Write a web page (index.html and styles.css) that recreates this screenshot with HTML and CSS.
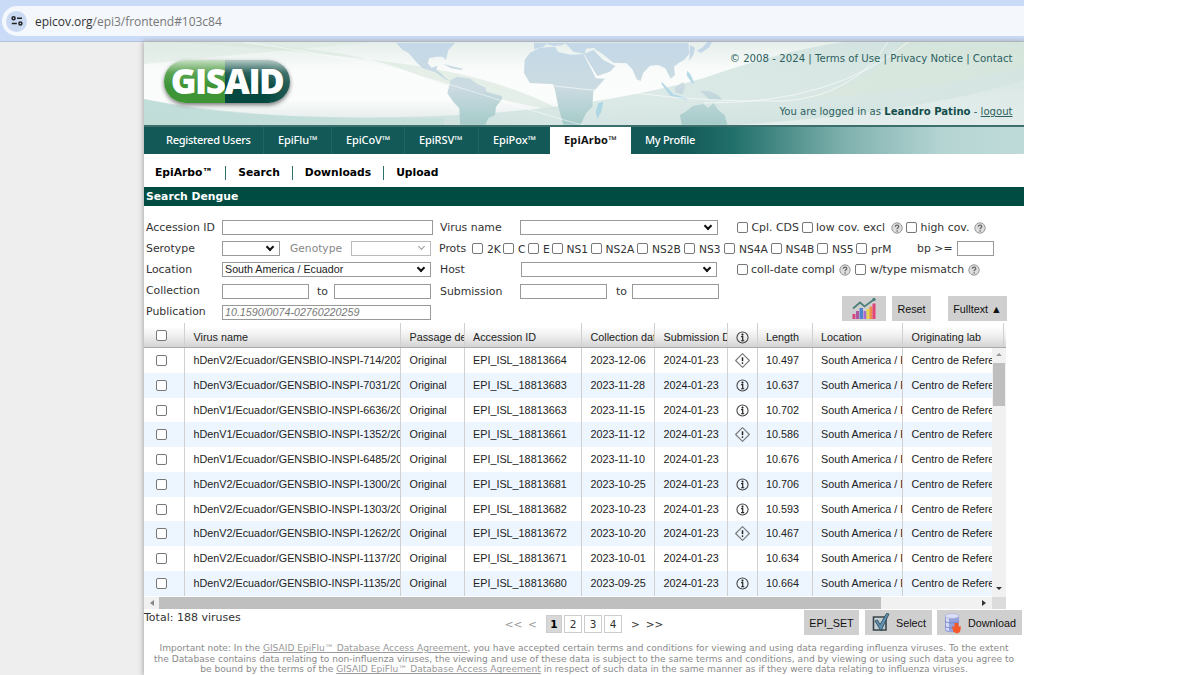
FILE: index.html
```html
<!DOCTYPE html>
<html lang="en">
<head>
  <meta charset="UTF-8">
  <meta name="viewport" content="width=device-width, initial-scale=1.0">
  <title>GISAID</title>
  <link rel="stylesheet" href="styles.css">
</head>
<body>
  <svg class="defs" width="0" height="0">
    <symbol id="info" viewBox="0 0 14 14">
      <circle cx="7" cy="7" r="5.2" fill="none" stroke="#444" stroke-width="1"/>
      <circle cx="7" cy="4.3" r="1" fill="#222"/>
      <path d="M5.700 6.200h1.500v3.600M5.700 10h2.900" fill="none" stroke="#222" stroke-width="1.1"/>
    </symbol>
    <symbol id="warn" viewBox="0 0 14 14">
      <path d="M7 .6L13.400 7 7 13.400 .6 7z" fill="none" stroke="#777" stroke-width="1" stroke-linejoin="round"/>
      <path d="M7 4v3.600" stroke="#222" stroke-width="1.4"/>
      <circle cx="7" cy="9.400" r=".8" fill="#222"/>
    </symbol>
    <symbol id="help" viewBox="0 0 12 12">
      <circle cx="6" cy="6" r="5.2" fill="#ddd" stroke="#999" stroke-width="1"/>
      <path d="M4.300 4.700c0-2.200 3.500-2.100 3.500-.1 0 1.300-1.700 1.200-1.700 2.600" fill="none" stroke="#666" stroke-width="1.200"/>
      <circle cx="6.100" cy="9" r=".8" fill="#666"/>
    </symbol>
  </svg>

  <div class="screen">
    <div class="browser">
      <div class="address">
        <span class="site-icon">
          <svg width="12" height="10" viewBox="0 0 12 10" fill="none" stroke="#222" stroke-width="1.5">
            <circle cx="2.6" cy="2.3" r="1.5"/><path d="M6 2.3h5M.8 7.6h5"/><circle cx="9.4" cy="7.6" r="1.5"/>
          </svg>
        </span>
        <span class="url">epicov.org<i>/epi3/frontend#103c84</i></span>
      </div>
    </div>

    <div class="page">
      <div class="header">
        <svg class="header-bg" width="880" height="83" viewBox="0 0 880 83">
          <defs>
            <linearGradient id="sky" x1="0" y1="0" x2="0" y2="1">
              <stop offset="0" stop-color="#e6efeb"/><stop offset=".35" stop-color="#fafcfb"/>
              <stop offset=".7" stop-color="#fbfcfc"/><stop offset="1" stop-color="#dfe9e7"/>
            </linearGradient>
            <linearGradient id="hill" x1="0" y1="0" x2="1" y2="0">
              <stop offset="0" stop-color="#b5d6d1"/><stop offset=".5" stop-color="#d2e4e1"/><stop offset="1" stop-color="#c8ddd9"/>
            </linearGradient>
            <linearGradient id="land" gradientUnits="userSpaceOnUse" x1="0" y1="128" x2="0" y2="374">
              <stop offset="0" stop-color="#c4d8e8"/><stop offset=".55" stop-color="#cbdbe1"/><stop offset="1" stop-color="#a5cbc9"/>
            </linearGradient>
            <linearGradient id="shine" x1="0" y1="0" x2="0" y2="1">
              <stop offset="0" stop-color="#fff" stop-opacity=".1"/><stop offset="1" stop-color="#fff" stop-opacity=".4"/>
            </linearGradient>
          </defs>
          <rect width="880" height="83" fill="url(#sky)"/>
          <path d="M0 0h230L80 14 0 22z" fill="#d9e8e0" opacity=".5"/>
          <path d="M30 0Q160 8 260 22T420 70Q330 55 260 28T30 0z" fill="#d7e6dc" opacity=".6"/>
          <path d="M0 57Q90 78 256 75Q430 72 560 36Q640 8 700 0H880V83H0z" fill="url(#hill)" opacity=".75"/>
          <path d="M0 57Q120 80 300 76V83H0z" fill="#c0ddd8" opacity=".6"/>
          <path d="M590 83Q780 70 880 38V83z" fill="url(#shine)"/>
          <path d="M700 0H880V24Q790 50 640 58Q720 50 760 0z" fill="#d9e7d9" opacity=".5"/>
          <g transform="translate(236 -42) scale(.33333)" fill="url(#land)">
            <path d="M48 128H226L205 150 198 180 188 170 170 170 148 174 143 190 155 203 173 197 168 210 182 218 197 235 208 240 212 243 195 238 165 216 128 205 112 190 85 158 68 150z"/>
            <path d="M190 192l26 7 34 7-8 4-30-6z"/>
            <path d="M212 240L232 230 270 236 292 252 315 262 320 275 366 288 365 300 348 320 345 345 325 355 316 374H240L238 325 222 308 202 280z"/>
            <path d="M462 128H560L545 136 520 138 500 132 490 140 462 148z"/>
            <path d="M450 158L480 143 525 140 535 156 572 164 610 162 648 235 675 236 640 275 637 320 618 340 602 374H550L535 320 525 270 518 252 450 250 432 220 434 180z"/>
            <path d="M555 128H640L645 143 618 146 615 162 580 155z"/>
            <path d="M612 162L640 150 670 180 706 198 690 215 652 228z"/>
            <path d="M640 128H925L928 160 915 178 895 190 882 200 885 225 872 236 856 205 835 195 810 197 790 218 782 243 770 238 757 208 740 190 700 188 668 162 645 148z"/>
            <path d="M930 135l15 8-5 22-12 18zM950 152l18-10 14-16h14l-8 16-25 17z"/>
            <path d="M884 262l25-15 8 14-10 22-20-5zM960 272l30 2 25 12 12 14-40-3z"/>
            <path d="M900 345L920 333 938 318 970 312 985 324 1000 308 1015 330 1034 345 1042 374H905z"/>
            <path d="M845 245l35 38 42 12-3 4-48-12-26-34zM922 212l10 12 12 28-8-3-16-23z" fill="#b4d8e5"/>
            <path d="M655 310l15-4-6 30-12 20-5-20z" fill="#aed6e3"/>
          </g>
          <path d="M383 41Q440 48 500 52Q560 60 640 59Q710 54 744 0M560 61Q690 62 764 0" fill="none" stroke="#fff" stroke-width="1" opacity=".6"/>
          <path d="M100 0Q230 18 330 50T440 83" fill="none" stroke="#fff" stroke-width="1" opacity=".5"/>
        </svg>
        <div class="logo">GISAID</div>
        <div class="legal">© 2008 - 2024 | Terms of Use | Privacy Notice | Contact</div>
        <div class="login">You are logged in as <b>Leandro Patino</b> - <u>logout</u></div>
      </div>

      <div class="nav">
        <span class="tab tab-users">Registered Users</span>
        <span class="tab tab-flu">EpiFlu™</span>
        <span class="tab tab-cov">EpiCoV™</span>
        <span class="tab tab-rsv">EpiRSV™</span>
        <span class="tab tab-pox">EpiPox™</span>
        <span class="tab active">EpiArbo™</span>
        <span class="tab tab-profile">My Profile</span>
      </div>
      <div class="subnav"><span>EpiArbo™</span><span>Search</span><span>Downloads</span><span>Upload</span></div>
      <div class="title">Search Dengue</div>

      <form class="filters">
        <div class="row row-accession">
          <label>Accession ID</label><div class="field"></div>
          <label>Virus name</label><div class="field select"></div>
          <i class="check"></i><span>Cpl. CDS</span>
          <i class="check"></i><span>low cov. excl</span><svg class="help"><use href="#help"/></svg>
          <i class="check"></i><span>high cov.</span><svg class="help"><use href="#help"/></svg>
        </div>
        <div class="row row-serotype">
          <label>Serotype</label><div class="field select"></div>
          <label class="disabled">Genotype</label><div class="field select off"></div>
          <label>Prots</label>
          <i class="check"></i><span>2K</span><i class="check"></i><span>C</span>
          <i class="check"></i><span>E</span><i class="check"></i><span>NS1</span>
          <i class="check"></i><span>NS2A</span><i class="check"></i><span>NS2B</span>
          <i class="check"></i><span>NS3</span><i class="check"></i><span>NS4A</span>
          <i class="check"></i><span>NS4B</span><i class="check"></i><span>NS5</span>
          <i class="check"></i><span>prM</span>
          <label>bp &gt;=</label><div class="field"></div>
        </div>
        <div class="row row-location">
          <label>Location</label><div class="field select">South America / Ecuador</div>
          <label>Host</label><div class="field select"></div>
          <i class="check"></i><span>coll-date compl</span><svg class="help"><use href="#help"/></svg>
          <i class="check"></i><span>w/type mismatch</span><svg class="help"><use href="#help"/></svg>
        </div>
        <div class="row row-dates">
          <label>Collection</label><div class="field"></div><label>to</label><div class="field"></div>
          <label>Submission</label><div class="field"></div><label>to</label><div class="field"></div>
        </div>
        <div class="row row-publication">
          <label>Publication</label><div class="field hint">10.1590/0074-02760220259</div>
          <div class="actions">
            <span class="btn btn-chart">
              <svg width="26" height="24" viewBox="0 0 26 24">
                <path d="M1.5 17h3v5h-3z" fill="#d8457c"/><path d="M5 14h3v8H5z" fill="#b0579f"/>
                <path d="M8.5 11h3.5v11H8.5z" fill="#4f83cf"/><path d="M12.5 14h3v8h-3z" fill="#a86bd0"/>
                <path d="M15.5 12h3v10h-3z" fill="#e8d64a"/><path d="M18.5 9.500h3V22h-3z" fill="#ee8a4c"/>
                <path d="M21.500 6.500h3V22h-3z" fill="#e0457a"/>
                <path d="M2 11.500l7-6 4.500 4L23 2.500" fill="none" stroke="#4c7f78" stroke-width="1.700"/>
                <circle cx="23" cy="2.500" r="1.700" fill="#4c7f78"/>
              </svg>
            </span>
            <span class="btn">Reset</span>
            <span class="btn btn-fulltext">Fulltext ▲</span>
          </div>
        </div>
      </form>

      <div class="grid">
        <div class="grid-row grid-head">
          <span><i class="check"></i></span><span>Virus name</span><span>Passage det</span><span>Accession ID</span>
          <span>Collection date</span><span>Submission Da</span><span><svg class="info"><use href="#info"/></svg></span>
          <span>Length</span><span>Location</span><span>Originating lab</span>
        </div>
        <div class="grid-main">
          <div class="grid-body" id="rows"></div>
          <div class="vscroll"><i class="up"></i><div class="vthumb"></div><i class="down"></i></div>
        </div>
        <div class="hscroll"><i class="left"></i><div class="hthumb"></div><i class="right"></i><div class="corner"></div></div>
      </div>

      <div class="footer">
        <div class="total">Total: 188 viruses</div>
        <div class="pages">
          <span class="dim">&lt;&lt;</span><span class="dim">&lt;</span>
          <b class="num current">1</b><span class="num">2</span><span class="num">3</span><span class="num">4</span>
          <span class="next">&gt;</span><span>&gt;&gt;</span>
        </div>
        <div class="buttons">
          <span class="btn btn-set">EPI_SET</span>
          <span class="btn btn-select">
            <svg width="20" height="21" viewBox="0 0 20 21">
              <path d="M2.500 5h12.500v13H2.500z" fill="#c5d0d5" stroke="#39444b" stroke-width="1.600"/>
              <path d="M4 9l2.500-1 2.500 4.500 6.500-11 2.500.5-8 17z" fill="#5f8fae" stroke="#2c4250" stroke-width=".8"/>
            </svg>Select</span>
          <span class="btn btn-download">
            <svg width="20" height="22" viewBox="0 0 20 22">
              <path d="M2 4v14c0 3 14 3 14 0V4z" fill="#96a2dc"/><path d="M3 5v13l3 1V6z" fill="#d3daf7"/>
              <ellipse cx="9" cy="4" rx="7" ry="2.500" fill="#d9def4" stroke="#a3abd5" stroke-width=".6"/>
              <path d="M2 9c0 2.500 14 2.500 14 0M2 14c0 2.500 14 2.500 14 0" fill="none" stroke="#6f7cc0" stroke-width=".8"/>
              <path d="M11.500 11h4v3.500h2.500L17 20l-3 1.500-3.500-1.500L9 14.500h2.500z" fill="#f4572a"/>
            </svg>Download</span>
        </div>
      </div>
      <div class="note">
        <p>Important note: In the <u>GISAID EpiFlu™ Database Access Agreement</u>, you have accepted certain terms and conditions for viewing and using data regarding influenza viruses. To the extent</p>
        <p>the Database contains data relating to non-influenza viruses, the viewing and use of these data is subject to the same terms and conditions, and by viewing or using such data you agree to</p>
        <p>be bound by the terms of the <u>GISAID EpiFlu™ Database Access Agreement</u> in respect of such data in the same manner as if they were data relating to influenza viruses.</p>
      </div>
    </div>
  </div>
  <script src="script.js"></script>
</body>
</html>
```
FILE: styles.css
```css
body {
  margin: 0;
  height: 675px;
  overflow: hidden;
  background: #fff;
  font-family: "DejaVu Sans", sans-serif;
  font-size: 10.9px;
  color: #333;
}
.defs {
  display: block;
}
.screen {
  width: 1024px;
  height: 675px;
  background: #eee;
  overflow: hidden;
}
.browser {
  box-sizing: border-box;
  height: 42px;
  padding-top: 6px;
  background: #c9dbf6;
  border-bottom: 1px solid #b3c3dc;
}
.address {
  display: flex;
  align-items: center;
  height: 30px;
  margin-left: 2px;
  padding-left: 4px;
  border-radius: 15px 0 0 15px;
  background: #f4f7fc;
}
.site-icon {
  display: flex;
  align-items: center;
  justify-content: center;
  width: 21px;
  height: 21px;
  border-radius: 50%;
  background: #cbdaf3;
}
.url {
  margin-left: 8px;
  font-family: "Open Sans", sans-serif;
  font-size: 12px;
  letter-spacing: -.03px;
  color: #333;
}
.url i {
  font-style: normal;
  color: #777;
}
.page {
  width: 880px;
  height: 633px;
  margin-left: 144px;
  background: #fff;
  box-shadow: 0 0 5px 1px #aaa;
}

/* header */
.header {
  position: relative;
  height: 83px;
  color: #2d5f60;
  font-size: 10.2px;
}
.header-bg {
  position: absolute;
  left: 0;
  top: 0;
}
.logo {
  position: absolute;
  left: 20px;
  top: 18px;
  width: 126px;
  height: 43px;
  border-radius: 22px;
  background: linear-gradient(180deg, rgba(255,255,255,.7), rgba(255,255,255,.15) 30%, rgba(255,255,255,0) 60%), linear-gradient(90deg, #3f9436 61px, #04483f 61px, #04483f 100px, #245c55);
  box-shadow: 0 2px 4px #777;
  color: #fff;
  font: 800 35px/42px "Open Sans", sans-serif;
  letter-spacing: -1.5px;
  text-align: center;
}
.legal, .login {
  position: absolute;
  right: 11.5px;
  top: 10px;
  line-height: 14px;
  white-space: nowrap;
}
.login {
  top: 63px;
  font-size: 10.1px;
}
.login b {
  color: #134d4b;
}

/* tabs */
.nav {
  display: flex;
  box-sizing: border-box;
  height: 29px;
  padding-left: 8px;
  border-top: 2px solid #3c6f6c;
  background: linear-gradient(90deg, #125957 540px, #22706b 590px, #7fb1ae 700px, #b5d5d3 800px, #bfdbd9);
}
.tab {
  box-sizing: border-box;
  padding-left: 14px;
  border-right: 1px solid #1e6764;
  color: #fff;
  font: 500 11px/26px "Noto Sans", sans-serif;
  letter-spacing: -.28px;
  white-space: nowrap;
}
.tab-users { width: 112px; }
.tab-flu { width: 68px; }
.tab-cov { width: 73px; }
.tab-rsv { width: 74px; }
.tab-pox { width: 71px; }
.tab-pox, .tab-profile { border: 0; }
.tab-flu, .tab-cov, .tab-rsv, .tab-pox {
  letter-spacing: -.1px;
}
.active {
  width: 81px;
  border: 0;
  background: #fff;
  color: #111;
  font-weight: 700;
  letter-spacing: .2px;
}
.subnav {
  display: flex;
  align-items: center;
  height: 28px;
  padding-top: 5px;
  color: #000;
  font-weight: bold;
  font-size: 10.75px;
  line-height: 14px;
}
.subnav span {
  padding: 0 12px;
  border-right: 1px solid #2f6f6b;
}
.subnav span:first-child {
  padding-left: 11px;
}
.subnav span:last-child {
  border: 0;
}
.title {
  height: 19px;
  padding-left: 2px;
  background: #004c43;
  color: #fff;
  font-weight: bold;
  font-size: 10.8px;
  line-height: 19px;
}

/* search form */
.filters {
  height: 117px;
  padding: 11px 0 0 2px;
  box-sizing: border-box;
}
.row {
  display: grid;
  align-items: center;
  height: 21.2px;
  white-space: nowrap;
}
.row-accession { grid-template-columns: 76px 218px 80px 217px 14.500px 50.500px 14px 74.500px 15px 15px 53px 12px; }
.row-serotype { grid-template-columns: 76px 68px 61px 88px 33px 15px 16px 15px 10px 15px 8.500px 15px 24px 15px 31.500px 15px 32px 15px 25px 15px 31.500px 15px 31.500px 15px 24px 15px 46px 40px 38px; }
.row-location { grid-template-columns: 76px 218px 81px 216px 14px 88px 16px 15px 98px 12px; }
.row-dates { grid-template-columns: 76px 95px 17px 106px 80px 96px 16px 87px; }
.row-publication { grid-template-columns: 76px 620px 1fr; }
.row-serotype span {
  padding-top: 2px;
  font-size: 10.7px;
}
.row > label:first-child {
  margin-top: -1px;
}
.field {
  box-sizing: border-box;
  height: 15px;
  border: 1px solid #999;
  background: #fff;
  font: 10.7px/13px "Liberation Sans", sans-serif;
  padding-left: 2px;
  color: #222;
}
.row-accession .field { width: 211px; }
.row-accession .field:nth-child(4) { width: 198px; }
.row-serotype .field { width: 58px; }
.row-serotype .field:nth-child(4) { width: 80px; }
.row-serotype .field:last-child { width: 37px; }
.row-location .field { width: 209px; }
.row-location .field:nth-child(4) { width: 196px; }
.row-dates .field { width: 87px; }
.row-dates .field:nth-child(4) { width: 97px; }
.row .hint {
  width: 209px;
  color: #777;
  font-style: italic;
}
.select {
  position: relative;
}
.select::after {
  content: "";
  position: absolute;
  right: 6px;
  top: 2px;
  width: 4px;
  height: 4px;
  border: solid #111;
  border-width: 0 2px 2px 0;
  transform: rotate(45deg);
}
.off {
  border-color: #bbb;
}
.disabled {
  color: #888;
  font-size: 10.7px;
}
.off::after {
  border-color: #999;
  border-width: 0 1px 1px 0;
}
.check {
  display: block;
  box-sizing: border-box;
  width: 11px;
  height: 11px;
  border: 1px solid #777;
  border-radius: 2px;
  background: #fff;
}
.help {
  display: block;
  width: 12px;
  height: 12px;
}
.actions {
  display: flex;
  height: 25px;
  margin-top: -7px;
  gap: 6px;
}
.btn {
  display: flex;
  box-sizing: border-box;
  align-items: center;
  justify-content: center;
  width: 39px;
  height: 25px;
  background: #cfcfcf;
  color: #111;
  font: 10.8px "Liberation Sans", "DejaVu Sans", sans-serif;
  white-space: nowrap;
}
.btn-chart { width: 44px; }
.btn-fulltext { width: 59px; margin-left: 11px; }

/* results */
.grid {
  width: 862px;
  font: 10.8px "Liberation Sans", sans-serif;
  color: #222;
}
.grid-row {
  display: grid;
  grid-template-columns: 41px 216px 63.500px 117.500px 73px 72.500px 30px 55px 90.500px 100.500px;
  height: 24.770px;
  line-height: 24.770px;
}
.grid-row > span {
  box-sizing: border-box;
  padding-left: 8.5px;
  border-right: 1px solid #d0d0d0;
  overflow: hidden;
  white-space: nowrap;
}
.grid-row > span:first-child {
  padding: 7px 0 0 12px;
}
.grid-row > span:nth-child(7) {
  padding: 5px 0 0 7.5px;
}
.grid-head {
  box-sizing: border-box;
  height: 25px;
  line-height: 29px;
  border-bottom: 1px solid #aaa;
  background: linear-gradient(#fff 15%, #eee 55%, #d4d4d4);
}
.grid-main {
  display: flex;
  height: 248.500px;
}
.grid-body {
  width: 848px;
  overflow: hidden;
}
.grid-body .grid-row > span:last-child {
  width: 90px;
  border: 0;
}
.grid-body .grid-row:nth-child(even) {
  background: #edf5fe;
}
.info {
  display: block;
  width: 15px;
  height: 15px;
}
.grid-head .info {
  margin-top: 2px;
}
.vscroll {
  display: flex;
  flex-direction: column;
  align-items: center;
  width: 14px;
  background: #f1f1f1;
}
.up, .down {
  border: 3px solid transparent;
  border-bottom: 3.5px solid #999;
  margin-top: 2px;
}
.down {
  border-bottom: 0;
  border-top: 3.5px solid #333;
  margin: auto 0 7px;
}
.vthumb {
  width: 12px;
  height: 43px;
  margin-top: 7px;
  background: #bfbfbf;
}
.hscroll {
  display: flex;
  align-items: center;
  height: 12.5px;
  background: #f1f1f1;
}
.left {
  margin: 0 5px 0 6px;
  border: 3px solid transparent;
  border-left: 0;
  border-right: 4px solid #888;
}
.hthumb {
  width: 722px;
  height: 12.5px;
  background: #bfbfbf;
}
.right {
  margin-left: auto;
  border: 3px solid transparent;
  border-right: 0;
  border-left: 4px solid #333;
}
.corner {
  width: 14px;
  height: 100%;
  margin-left: 6px;
  background: #dcdcdc;
}

/* footer */
.footer {
  display: grid;
  grid-template-columns: 360px 300px 1fr;
  height: 34px;
}
.total {
  font-size: 11px;
  line-height: 17px;
}
.pages {
  display: flex;
  align-items: center;
  height: 18px;
  margin-top: 6px;
  font-size: 10.5px;
}
.pages > span:not(.num) {
  width: 19px;
  text-align: center;
}
.pages .dim {
  color: #999;
}
.pages .next {
  margin-left: 2px;
}
.num {
  box-sizing: border-box;
  width: 18px;
  height: 18px;
  margin-right: 2px;
  border: 1px solid #ccc;
  line-height: 16px;
  text-align: center;
}
.current {
  width: 16px;
  margin-left: 4px;
  background: #d8d8d8;
  color: #000;
}
.buttons {
  display: flex;
  gap: 5px;
  margin-top: 1px;
}
.btn-set { width: 55px; margin-right: 1px; }
.btn-select { width: 67px; gap: 5px; }
.btn-download { width: 85px; gap: 5px; }
.note {
  color: #8a8a8a;
  font-size: 9.08px;
  line-height: 10.7px;
  white-space: nowrap;
}
.note p {
  margin: 0;
  text-align: center;
}
.note u {
  color: #999;
}
```
FILE: script.js
```js
const data = [
  ['hDenV2', '714/202', '18813664', '2023-12-06', 'warn', '10.497'],
  ['hDenV3', '7031/20', '18813683', '2023-11-28', 'info', '10.637'],
  ['hDenV1', '6636/20', '18813663', '2023-11-15', 'info', '10.702'],
  ['hDenV1', '1352/20', '18813661', '2023-11-12', 'warn', '10.586'],
  ['hDenV1', '6485/20', '18813662', '2023-11-10', '', '10.676'],
  ['hDenV2', '1300/20', '18813681', '2023-10-25', 'info', '10.706'],
  ['hDenV2', '1303/20', '18813682', '2023-10-23', 'info', '10.593'],
  ['hDenV2', '1262/20', '18813672', '2023-10-20', 'warn', '10.467'],
  ['hDenV2', '1137/20', '18813671', '2023-10-01', '', '10.634'],
  ['hDenV2', '1135/20', '18813680', '2023-09-25', 'info', '10.664']
];

document.getElementById('rows').innerHTML = data.map(([type, num, id, date, icon, length]) => `
  <div class="grid-row">
    <span><i class="check"></i></span>
    <span>${type}/Ecuador/GENSBIO-INSPI-${num}</span>
    <span>Original</span>
    <span>EPI_ISL_${id}</span>
    <span>${date}</span>
    <span>2024-01-23</span>
    <span>${icon ? `<svg class="info"><use href="#${icon}"/></svg>` : ''}</span>
    <span>${length}</span>
    <span>South America / E</span>
    <span>Centro de Refere</span>
  </div>`).join('');
```
